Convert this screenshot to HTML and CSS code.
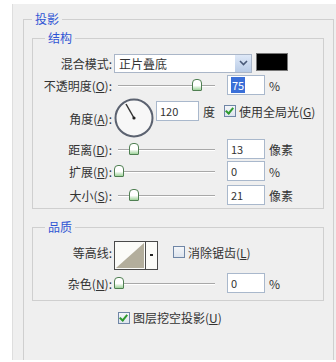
FILE: index.html
```html
<!DOCTYPE html>
<html>
<head>
    <title>投影</title>
    <link rel="stylesheet" href="styles.css">
</head>
<body>
    <div class="panel">
        <fieldset class="outer">
            <legend>投影</legend>

            <fieldset class="group structure">
                <legend>结构</legend>

                <div class="row row-blend">
                    <span class="label">混合模式:</span>
                    <div class="select">
                        <span class="select-text">正片叠底</span>
                        <span class="select-btn">
                            <svg width="9" height="6" viewBox="0 0 9 6"><path d="M1 1 L4.5 4.5 L8 1" fill="none" stroke="#4a5a78" stroke-width="1.6"/></svg>
                        </span>
                    </div>
                    <span class="swatch"></span>
                </div>

                <div class="row row-opacity">
                    <span class="label">不透明度(<u>O</u>):</span>
                    <div class="slider">
                        <span class="thumb" style="left: 74px;"></span>
                    </div>
                    <div class="field"><span class="selected">75</span></div>
                    <span class="unit">%</span>
                </div>

                <div class="row row-angle">
                    <span class="label">角度(<u>A</u>):</span>
                    <div class="dial">
                        <svg width="40" height="42" viewBox="0 0 40 42">
                            <circle cx="20" cy="21" r="18.5" fill="#f7f7f7" stroke="#5b6270" stroke-width="2"/>
                            <line x1="20" y1="21" x2="12" y2="7" stroke="#333" stroke-width="1.5"/>
                            <circle cx="20" cy="21" r="1.6" fill="#222"/>
                        </svg>
                    </div>
                    <div class="field angle-field">120</div>
                    <span class="unit">度</span>
                    <span class="check checked"></span>
                    <span class="check-label">使用全局光(<u>G</u>)</span>
                </div>

                <div class="row row-distance">
                    <span class="label">距离(<u>D</u>):</span>
                    <div class="slider">
                        <span class="thumb" style="left: 11px;"></span>
                    </div>
                    <div class="field">13</div>
                    <span class="unit">像素</span>
                </div>

                <div class="row row-spread">
                    <span class="label">扩展(<u>R</u>):</span>
                    <div class="slider">
                        <span class="thumb" style="left: -4px;"></span>
                    </div>
                    <div class="field">0</div>
                    <span class="unit">%</span>
                </div>

                <div class="row row-size">
                    <span class="label">大小(<u>S</u>):</span>
                    <div class="slider">
                        <span class="thumb" style="left: 11px;"></span>
                    </div>
                    <div class="field">21</div>
                    <span class="unit">像素</span>
                </div>
            </fieldset>

            <fieldset class="group quality">
                <legend>品质</legend>

                <div class="row row-contour">
                    <span class="label">等高线:</span>
                    <div class="contour">
                        <svg width="44" height="29" viewBox="0 0 44 29">
                            <rect x="0.5" y="0.5" width="43" height="28" fill="#fbfbf8" stroke="#4a4a4a"/>
                            <path d="M2 27 L30 2 L30 27 Z" fill="#b3ae9c"/>
                            <line x1="31.5" y1="1" x2="31.5" y2="28" stroke="#4a4a4a"/>
                            <rect x="36" y="13" width="3" height="2" fill="#222"/>
                        </svg>
                    </div>
                    <span class="check"></span>
                    <span class="check-label">消除锯齿(<u>L</u>)</span>
                </div>

                <div class="row row-noise">
                    <span class="label">杂色(<u>N</u>):</span>
                    <div class="slider">
                        <span class="thumb" style="left: -4px;"></span>
                    </div>
                    <div class="field">0</div>
                    <span class="unit">%</span>
                </div>
            </fieldset>

            <div class="knockout">
                <span class="check checked"></span>
                <span class="check-label">图层挖空投影(<u>U</u>)</span>
            </div>
        </fieldset>
    </div>
</body>
</html>
```

FILE: styles.css
```css
body {
    margin: 0;
    background-color: #fff;
    font-family: "Noto Sans CJK SC", "DejaVu Sans", sans-serif;
    font-size: 12px;
    color: #333;
}

u {
    text-decoration: underline;
}

.panel {
    margin: 4px 0 0 12px;
    height: 356px;
    background-color: #efefef;
    border-left: 1px solid #dedede;
    overflow: hidden;
}

fieldset {
    margin: 0;
    padding: 0;
    border: 1px solid #cfcfcf;
    min-width: 0;
}

legend {
    padding: 0 3px;
    line-height: 14px;
    color: #2f55d4;
    font-size: 12px;
}

.outer {
    margin: 8px 2px 0 10px;
    padding: 0 9px 0 8px;
    height: 400px;
    border-bottom: none;
}

.outer > legend {
    margin-left: 0;
}

.group > legend {
    margin-left: 12px;
}

.structure {
    margin-top: 5px;
    padding: 8px 0 3px 0;
}

.quality {
    margin-top: 11px;
    padding: 6px 0 7px 0;
}

.row {
    display: flex;
    align-items: center;
    height: 20px;
}

.label {
    width: 79px;
    margin-right: 2px;
    text-align: right;
    white-space: nowrap;
}

.row-opacity {
    margin-top: 2px;
}

.row-angle {
    height: 44px;
    margin-top: 1px;
}

.row-distance {
    margin-top: -1px;
}

.row-spread {
    margin-top: 2px;
}

.row-size {
    margin-top: 4px;
}

.row-contour {
    height: 30px;
}

.row-noise {
    margin-top: 3px;
}

/* dropdown */
.select {
    display: flex;
    width: 136px;
    height: 17px;
    border: 1px solid #aab6c8;
    background-color: #fff;
}

.select-text {
    flex: 1;
    padding-left: 4px;
    line-height: 17px;
}

.select-btn {
    width: 16px;
    display: flex;
    align-items: center;
    justify-content: center;
    background: linear-gradient(#dfe9f8, #b8cbe6);
}

.swatch {
    width: 30px;
    height: 16px;
    margin-left: 4px;
    margin-top: -3px;
    background-color: #000;
    border: 1px solid #777;
}

/* sliders */
.slider {
    position: relative;
    width: 97px;
    height: 12px;
    margin-left: 4px;
}

.slider::before {
    content: "";
    position: absolute;
    left: 0;
    right: 0;
    top: 6px;
    height: 1px;
    background-color: #a8a8a8;
    border-bottom: 1px solid #fff;
}

.thumb {
    position: absolute;
    top: 0;
    width: 8px;
    height: 10px;
    border: 1px solid #4f7f52;
    border-radius: 4px 4px 1px 1px;
    background: linear-gradient(#fff 55%, #9ed39a);
}

.field {
    width: 33px;
    height: 18px;
    margin-left: 12px;
    padding-left: 3px;
    border: 1px solid #a9b8cc;
    background-color: #fff;
    line-height: 18px;
    font-size: 11px;
}

.selected {
    display: inline-block;
    padding: 0 1px;
    background-color: #3a6fd8;
    color: #fff;
    line-height: 16px;
}

.unit {
    margin-left: 4px;
}

/* angle */
.dial {
    height: 42px;
}

.angle-field {
    width: 38px;
    margin-left: 2px;
    margin-top: -14px;
}

.row-angle .unit {
    margin-top: -14px;
}

.row-angle .check {
    margin-left: 9px;
    margin-top: -14px;
}

.row-angle .check-label {
    margin-top: -14px;
}

/* checkboxes */
.check {
    display: inline-block;
    width: 10px;
    height: 10px;
    border: 1px solid #6f86a6;
    background: linear-gradient(#f4f6f9, #dde4ee);
    position: relative;
}

.check.checked::after {
    content: "";
    position: absolute;
    left: 2px;
    top: 0;
    width: 3px;
    height: 6px;
    border-right: 2px solid #2e9a2e;
    border-bottom: 2px solid #2e9a2e;
    transform: rotate(40deg);
}

.check-label {
    margin-left: 3px;
    white-space: nowrap;
}

/* contour */
.contour {
    height: 29px;
}

.row-contour .check {
    margin-left: 15px;
    margin-top: -6px;
}

.row-contour .check-label {
    margin-top: -6px;
}

.row-contour .label {
    margin-top: -6px;
}

.knockout {
    display: flex;
    align-items: center;
    margin-top: 8px;
    padding-left: 86px;
}
```
